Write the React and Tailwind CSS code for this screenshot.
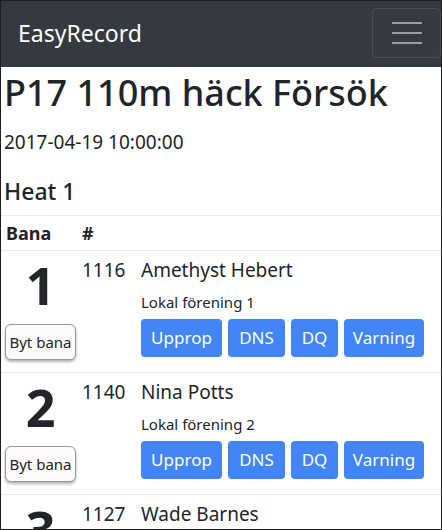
import React from 'react';

const entries = [
  { lane: 1, bib: 1116, name: 'Amethyst Hebert', club: 'Lokal förening 1' },
  { lane: 2, bib: 1140, name: 'Nina Potts', club: 'Lokal förening 2' },
  { lane: 3, bib: 1127, name: 'Wade Barnes', club: 'Lokal förening 3' },
];

// fixed widths so the button row lines up like the original
const actions = [
  { label: 'Upprop', w: 'w-[81px]' },
  { label: 'DNS', w: 'w-[57px]' },
  { label: 'DQ', w: 'w-[47px]' },
  { label: 'Varning', w: 'w-[80px]' },
];

const Navbar = () => (
  <nav className="h-[66px] bg-[#343a40] flex items-center justify-between pl-[17px] pr-0">
    <span className="text-[23px] text-white leading-none mb-[1px]">EasyRecord</span>
    <button className="w-[69px] h-[50px] mb-[2px] rounded-[5px] border border-white/10 flex flex-col items-center justify-center gap-[8px]">
      <span className="block w-[30px] h-[2px] bg-white/50" />
      <span className="block w-[30px] h-[2px] bg-white/50" />
      <span className="block w-[30px] h-[2px] bg-white/50" />
    </button>
  </nav>
);

const EntryRow = ({ entry }) => (
  <div className="grid grid-cols-[77px_60px_1fr] border-t border-[#ececec]">
    {/* Bana */}
    <div className="pl-[4px] pt-[3px] flex flex-col items-center w-[75px]">
      <span className="text-[52px] font-bold leading-[1.2]">{entry.lane}</span>
      <button className="mt-[8px] w-[71px] h-[36px] rounded-[6px] border border-[#9a9a9a] bg-[#fdfaf9] text-[15px] shadow-[0_2px_3px_rgba(0,0,0,0.3)]">
        Byt bana
      </button>
    </div>
    {/* # */}
    <div className="pl-[4px] pt-[4px] text-[19px] leading-[30px]">{entry.bib}</div>
    {/* Name */}
    <div className="pl-[3px] pt-[4px] pb-[15px]">
      <div className="text-[19px] leading-[30px]">{entry.name}</div>
      <div className="mt-[5px] text-[15px] leading-[24px]">{entry.club}</div>
      <div className="mt-[5px] flex gap-[6px]">
        {actions.map((a) => (
          <button
            key={a.label}
            className={`${a.w} h-[38px] rounded-[4px] bg-[#4285f4] text-white text-[17px]`}
          >
            {a.label}
          </button>
        ))}
      </div>
    </div>
  </div>
);

export default function App() {
  return (
    <div className="w-[442px] h-[530px] overflow-hidden border border-[#1e1e1e] bg-white text-[#212529] font-['Noto_Sans',sans-serif]">
      <Navbar />
      <div className="pl-[3px]">
        <h1 className="mt-[2px] text-[36px] font-medium leading-[48px]">P17 110m häck Försök</h1>
        <p className="mt-[13px] text-[19px] leading-[24px]">2017-04-19 10:00:00</p>
        <h4 className="mt-[23px] text-[23px] font-medium leading-[29px]">Heat 1</h4>
      </div>
      <div className="mt-[9px]">
        <div className="grid grid-cols-[77px_60px_1fr] border-t border-[#ececec] h-[35px] items-center text-[18px] font-bold">
          <span className="pl-[5px]">Bana</span>
          <span className="pl-[4px]">#</span>
          <span />
        </div>
        {entries.map((e) => (
          <EntryRow key={e.lane} entry={e} />
        ))}
      </div>
    </div>
  );
}
